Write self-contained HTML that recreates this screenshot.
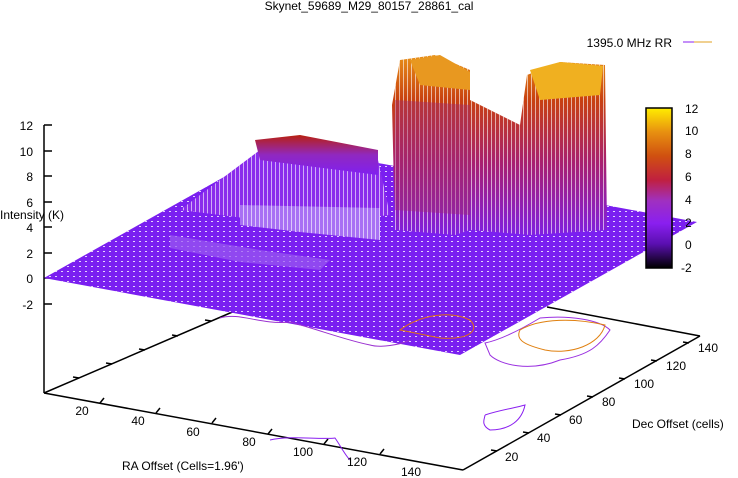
<!DOCTYPE html>
<html><head><style>
html,body{margin:0;padding:0;background:#fff;}
svg{display:block;font-family:"Liberation Sans",sans-serif;}
</style></head><body>
<svg width="738" height="478" viewBox="0 0 738 478" xmlns="http://www.w3.org/2000/svg">
<defs>
<linearGradient id="cb" x1="0" y1="1" x2="0" y2="0">
<stop offset="0" stop-color="#000"/>
<stop offset="0.15" stop-color="#5a0fb0"/>
<stop offset="0.28" stop-color="#8a1ff0"/>
<stop offset="0.42" stop-color="#a030c0"/>
<stop offset="0.55" stop-color="#c02040"/>
<stop offset="0.7" stop-color="#d05010"/>
<stop offset="0.85" stop-color="#e89010"/>
<stop offset="1" stop-color="#ffee00"/>
</linearGradient>
<linearGradient id="tw" x1="0" y1="0" x2="0" y2="1">
<stop offset="0" stop-color="#e89018"/>
<stop offset="0.25" stop-color="#c84010"/>
<stop offset="0.6" stop-color="#a82070"/>
<stop offset="1" stop-color="#8020e0"/>
</linearGradient>
<linearGradient id="rd" x1="0" y1="0" x2="0" y2="1">
<stop offset="0" stop-color="#b82010"/>
<stop offset="0.5" stop-color="#9028c0"/>
<stop offset="1" stop-color="#8020f0"/>
</linearGradient>
<pattern id="dt" width="6" height="5" patternUnits="userSpaceOnUse">
<rect x="1" y="1" width="2" height="1" fill="#fff" opacity="0.8"/>
</pattern>
<pattern id="vs" width="4" height="4" patternUnits="userSpaceOnUse">
<rect x="3" width="1" height="4" fill="#fff" opacity="0.6"/>
</pattern>
</defs>
<text x="369" y="10" font-size="12" text-anchor="middle">Skynet_59689_M29_80157_28861_cal</text>
<text x="672" y="47" font-size="12" text-anchor="end">1395.0 MHz RR</text>
<line x1="683" y1="42" x2="694" y2="42" stroke="#8a1ff0"/>
<line x1="694" y1="42" x2="712" y2="42" stroke="#e0a020"/>
<!-- axes -->
<g stroke="#000" stroke-width="1.5" fill="none">
<line x1="44" y1="125" x2="44" y2="393"/>
<line x1="44" y1="393" x2="463" y2="470"/>
<line x1="463" y1="470" x2="700" y2="336"/>
<line x1="700" y1="336" x2="547" y2="307"/>
<line x1="44" y1="393" x2="244" y2="307"/>
</g>
<g stroke="#000" stroke-width="1.5">
<line x1="44" y1="125" x2="52" y2="125"/><line x1="44" y1="151" x2="52" y2="151"/>
<line x1="44" y1="176" x2="52" y2="176"/><line x1="44" y1="202" x2="52" y2="202"/>
<line x1="44" y1="227" x2="52" y2="227"/><line x1="44" y1="253" x2="52" y2="253"/>
<line x1="44" y1="278" x2="52" y2="278"/><line x1="44" y1="304" x2="52" y2="304"/>
<line x1="100" y1="403" x2="104" y2="398"/><line x1="156" y1="413" x2="160" y2="408"/>
<line x1="212" y1="423" x2="216" y2="418"/><line x1="268" y1="434" x2="272" y2="429"/>
<line x1="324" y1="444" x2="328" y2="439"/><line x1="380" y1="454" x2="384" y2="449"/>
<line x1="79" y1="378" x2="73" y2="377"/><line x1="112" y1="364" x2="106" y2="363"/>
<line x1="145" y1="350" x2="139" y2="349"/><line x1="178" y1="336" x2="172" y2="335"/>
<line x1="211" y1="321" x2="205" y2="320"/>
<line x1="497" y1="451" x2="491" y2="450"/><line x1="529" y1="433" x2="523" y2="432"/>
<line x1="561" y1="415" x2="555" y2="414"/><line x1="593" y1="397" x2="587" y2="396"/>
<line x1="625" y1="379" x2="619" y2="378"/><line x1="657" y1="361" x2="651" y2="360"/>
<line x1="689" y1="343" x2="683" y2="342"/>
</g>
<g font-size="12" text-anchor="end">
<text x="33" y="130">12</text><text x="33" y="156">10</text><text x="33" y="181">8</text>
<text x="33" y="207">6</text><text x="33" y="232">4</text><text x="33" y="258">2</text>
<text x="33" y="283">0</text><text x="33" y="309">-2</text>
</g>
<!-- surface -->
<polygon points="44,278 460,355 697,222 281,145" fill="#7a1ff0"/>
<polygon points="44,278 460,355 697,222 281,145" fill="url(#dt)"/>
<polygon points="180,210 260,150 378,160 390,215 300,225" fill="#8a2cec"/>
<polygon points="180,210 260,150 378,160 390,215 300,225" fill="url(#vs)"/>
<polygon points="255,140 300,135 378,150 378,175 260,160" fill="url(#rd)"/>
<polygon points="240,205 380,208 380,240 300,232 240,225" fill="#a870f4"/>
<polygon points="240,205 380,208 380,240 300,232 240,225" fill="url(#vs)"/>
<polygon points="170,235 260,250 330,260 320,270 240,262 170,248" fill="#9a5af0" opacity="0.7"/>
<!-- towers -->
<polygon points="392,105 400,60 435,55 470,70 470,100 520,125 527,75 560,62 605,65 607,230 530,235 470,230 455,235 395,230" fill="url(#tw)"/>
<polygon points="392,105 400,60 435,55 470,70 470,100 520,125 527,75 560,62 605,65 607,230 530,235 470,230 455,235 395,230" fill="url(#vs)"/>
<polygon points="410,60 440,55 470,72 470,90 420,85" fill="#e89820"/>
<polygon points="530,70 560,62 603,66 600,95 540,100" fill="#f0b020"/>
<polygon points="395,100 470,105 470,215 395,210" fill="#a02870" opacity="0.4"/>
<text x="0" y="219" font-size="12">Intensity (K)</text>
<!-- contours -->
<g fill="none" stroke-width="1">
<path d="M220,318 C240,312 260,325 290,322 C320,330 345,340 370,345 C380,348 400,345 410,340" stroke="#9a30d0"/>
<path d="M400,330 C420,315 450,310 470,320 C480,330 470,340 440,338 Z" stroke="#e07010"/>
<path d="M485,343 C500,340 520,330 540,318 C570,315 600,320 610,330 C600,345 590,355 560,360 C530,372 500,365 490,355 Z" stroke="#9a30e0"/>
<path d="M520,330 C540,318 575,318 605,325 C600,345 570,355 545,350 C525,345 515,340 520,330" stroke="#e08010"/>
<path d="M485,415 C500,410 515,408 525,405 C522,420 510,430 490,430 C480,425 485,418 485,415" stroke="#8a1ff0"/>
<path d="M270,440 C290,435 320,440 335,438 C340,445 345,455 350,460" stroke="#8a1ff0"/>
</g>
<!-- labels -->
<g font-size="12" text-anchor="middle">
<text x="82" y="415">20</text><text x="138" y="425">40</text><text x="193" y="436">60</text>
<text x="249" y="446">80</text><text x="303" y="456">100</text><text x="357" y="466">120</text><text x="411" y="476">140</text>
</g>
<text x="122" y="470" font-size="12">RA Offset (Cells=1.96')</text>
<g font-size="12">
<text x="505" y="461">20</text><text x="537" y="442">40</text><text x="569" y="424">60</text>
<text x="602" y="406">80</text><text x="634" y="388">100</text><text x="666" y="370">120</text><text x="698" y="352">140</text>
</g>
<text x="632" y="428" font-size="12">Dec Offset (cells)</text>
<!-- colorbar -->
<rect x="646" y="108" width="26" height="160" fill="url(#cb)" stroke="#000" stroke-width="1.5"/>
<g font-size="12">
<text x="685" y="113">12</text><text x="685" y="135">10</text><text x="685" y="158">8</text>
<text x="685" y="181">6</text><text x="685" y="204">4</text><text x="685" y="227">2</text>
<text x="685" y="249">0</text><text x="681" y="272">-2</text>
</g>
</svg>
</body></html>
